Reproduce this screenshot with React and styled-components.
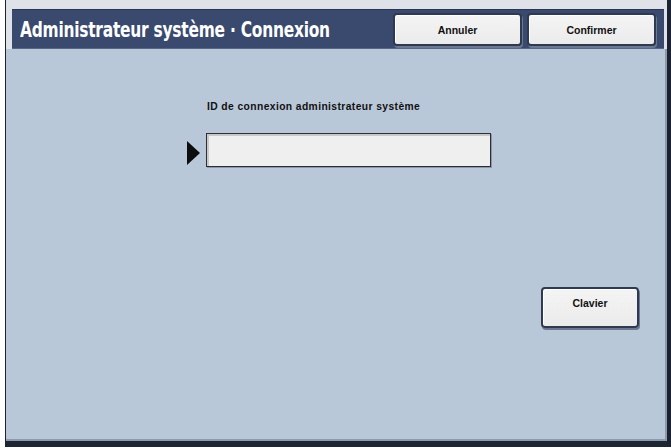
import React from "react";
import styled, { createGlobalStyle } from "styled-components";

const Global = createGlobalStyle`
  html, body { margin: 0; padding: 0; background: #ffffff; }
  body { width: 671px; height: 448px; overflow: hidden; font-family: "Liberation Sans", Arial, sans-serif; }
`;

const Frame = styled.div`
  box-sizing: border-box;
  margin-left: 5px;
  width: 666px;
  height: 447px;
  border-left: 1px solid #1c2232;
  border-right: 4px solid #1a2130;
  border-bottom: 6px solid #1e2634;
  background: #b9c8d9;
  display: flex;
  flex-direction: column;
  box-shadow: inset -2px -2px 0 #8d9aab;
`;

const TopStrip = styled.div`
  background: #dfe3e9;
  padding: 9px 3px 0 6px;
`;

const Header = styled.div`
  height: 40px;
  background: #394a6e;
  border-top: 1px solid #2a3654;
  display: flex;
  align-items: center;
  padding: 0 8px 0 8px;
  box-sizing: border-box;
  box-shadow: inset 0 -1px 0 #56658a;
`;

const Title = styled.div`
  flex: 1;
  min-width: 0;
  color: #ffffff;
  font-family: "DejaVu Sans Condensed", "DejaVu Sans", sans-serif;
  font-weight: bold;
  font-size: 22px;
  letter-spacing: -0.3px;
  transform: scaleX(0.78);
  transform-origin: left center;
  white-space: nowrap;
`;

const Button = styled.button`
  box-sizing: border-box;
  flex: none;
  width: ${(p) => p.$w}px;
  height: ${(p) => p.$h}px;
  margin-left: ${(p) => p.$ml || 0}px;
  background: linear-gradient(#f4f4f4, #ebebeb);
  border: 2px solid #2f3a52;
  border-radius: 4px;
  box-shadow: 1px 2px 0 #6c7890, inset 1px 1px 0 #ffffff;
  font-family: "Liberation Sans", Arial, sans-serif;
  font-weight: bold;
  font-size: 10.5px;
  color: #111;
  padding: 0;
  display: flex;
  align-items: ${(p) => (p.$top ? "flex-start" : "center")};
  justify-content: center;
  padding-top: ${(p) => p.$pt || 0}px;
`;

const Body = styled.div`
  flex: 1;
  display: flex;
  flex-direction: column;
`;

const Label = styled.div`
  margin: 52px 0 0 201px;
  font-family: "Liberation Sans", Arial, sans-serif;
  font-weight: bold;
  font-size: 10.3px;
  letter-spacing: 0.4px;
  color: #111;
`;

const FieldRow = styled.div`
  display: flex;
  align-items: center;
  margin: 21px 0 0 181px;
`;

const Arrow = styled.div`
  width: 0;
  height: 0;
  border-top: 12px solid transparent;
  border-bottom: 12px solid transparent;
  border-left: 13px solid #0d0d0d;
  margin-right: 6px;
  margin-top: 5px;
`;

const Input = styled.div`
  box-sizing: border-box;
  width: 285px;
  height: 34px;
  background: #efefef;
  border: 1px solid #2d2d33;
  box-shadow: inset 2px 2px 0 #c9c9cc, 1px 1px 0 #8b97a8;
`;

const KeyboardRow = styled.div`
  display: flex;
  justify-content: flex-end;
  margin: 120px 28px 0 0;
`;

export default function App() {
  return (
    <>
      <Global />
      <Frame>
        <TopStrip>
          <Header>
            <Title>Administrateur système · Connexion</Title>
            <Button $w={129} $h={33}>Annuler</Button>
            <Button $w={129} $h={33} $ml={5}>Confirmer</Button>
          </Header>
        </TopStrip>
        <Body>
          <Label>ID de connexion administrateur système</Label>
          <FieldRow>
            <Arrow />
            <Input />
          </FieldRow>
          <KeyboardRow>
            <Button $w={98} $h={41} $top $pt={8}>Clavier</Button>
          </KeyboardRow>
        </Body>
      </Frame>
    </>
  );
}
